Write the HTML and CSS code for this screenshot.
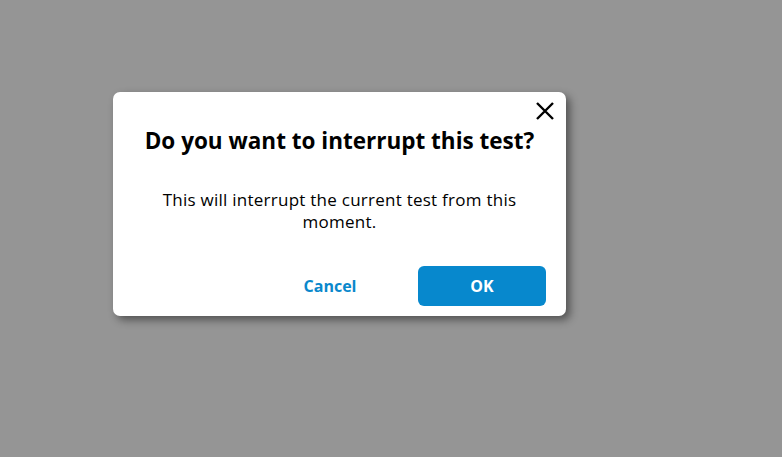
FILE: index.html
```html
<!DOCTYPE html>
<html>
<head>
<meta charset="utf-8">
<link rel="stylesheet" href="styles.css">
</head>
<body>
<div class="overlay">
  <div class="dialog" role="dialog">
    <button class="close" aria-label="Close">
      <svg width="20" height="20" viewBox="0 0 20 20"><path d="M2 2 L18 18 M18 2 L2 18" stroke="#000" stroke-width="2.4" fill="none"/></svg>
    </button>
    <h1 class="title">Do you want to interrupt this test?</h1>
    <p class="body">This will interrupt the current test from this moment.</p>
    <div class="actions">
      <button class="btn btn-text">Cancel</button>
      <button class="btn btn-primary">OK</button>
    </div>
  </div>
</div>
</body>
</html>
```
FILE: styles.css
```css
html, body {
  margin: 0;
  padding: 0;
  height: 100%;
}
body {
  background: #959595;
  font-family: "Open Sans", sans-serif;
  color: #000;
}
.overlay {
  position: relative;
  width: 100%;
  height: 100%;
}
.dialog {
  position: absolute;
  left: 113px;
  top: 92px;
  width: 453px;
  box-sizing: border-box;
  background: #fff;
  border-radius: 7px;
  box-shadow: 4px 4px 8px rgba(0,0,0,0.45);
  padding: 33px 20px 10px;
  display: flex;
  flex-direction: column;
  align-items: center;
}
.close {
  position: absolute;
  top: 9px;
  right: 11px;
  background: none;
  border: 0;
  padding: 0;
  width: 20px;
  height: 20px;
  cursor: pointer;
}
.title {
  margin: 0;
  font-size: 22.5px;
  line-height: 32px;
  font-weight: 700;
  text-align: center;
}
.body {
  margin: 32px 0 0;
  font-size: 17px;
  letter-spacing: 0.25px;
  line-height: 22px;
  text-align: center;
  max-width: 380px;
}
.actions {
  margin-top: 33px;
  align-self: flex-end;
  display: flex;
  gap: 24px;
}
.btn {
  width: 128px;
  height: 40px;
  border: 0;
  border-radius: 6px;
  font-family: inherit;
  font-size: 16px;
  font-weight: 700;
  cursor: pointer;
}
.btn-text {
  background: transparent;
  color: #0a88cc;
}
.btn-primary {
  background: #0788cd;
  color: #fff;
}
```
